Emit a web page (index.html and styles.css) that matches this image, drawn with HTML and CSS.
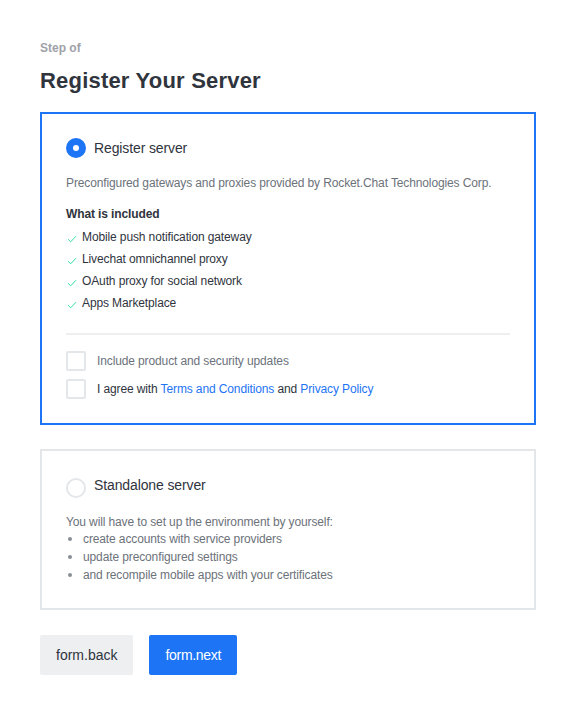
FILE: index.html
```html
<!DOCTYPE html>
<html>
<head>
<meta charset="utf-8">
<link rel="stylesheet" href="styles.css">
</head>
<body>
<main class="page">
  <div class="step">Step of</div>
  <h1 class="title">Register Your Server</h1>

  <section class="card card-selected">
    <label class="option">
      <span class="radio radio-on"></span>
      <span class="option-label">Register server</span>
    </label>
    <p class="desc">Preconfigured gateways and proxies provided by Rocket.Chat Technologies Corp.</p>
    <div class="included-title">What is included</div>
    <ul class="checks">
      <li><svg class="check" viewBox="0 0 10 8" width="10" height="8"><path d="M1 4.2 L3.7 6.8 L9 1.2" fill="none" stroke="#2de0a5" stroke-width="1"/></svg>Mobile push notification gateway</li>
      <li><svg class="check" viewBox="0 0 10 8" width="10" height="8"><path d="M1 4.2 L3.7 6.8 L9 1.2" fill="none" stroke="#2de0a5" stroke-width="1"/></svg>Livechat omnichannel proxy</li>
      <li><svg class="check" viewBox="0 0 10 8" width="10" height="8"><path d="M1 4.2 L3.7 6.8 L9 1.2" fill="none" stroke="#2de0a5" stroke-width="1"/></svg>OAuth proxy for social network</li>
      <li><svg class="check" viewBox="0 0 10 8" width="10" height="8"><path d="M1 4.2 L3.7 6.8 L9 1.2" fill="none" stroke="#2de0a5" stroke-width="1"/></svg>Apps Marketplace</li>
    </ul>
    <hr class="divider">
    <div class="checklist">
      <label class="checkrow">
        <span class="checkbox"></span>
        <span class="check-text muted">Include product and security updates</span>
      </label>
      <label class="checkrow">
        <span class="checkbox"></span>
        <span class="check-text">I agree with <a class="link">Terms and Conditions</a> and <a class="link">Privacy Policy</a></span>
      </label>
    </div>
  </section>

  <section class="card card-standalone">
    <label class="option option-top">
      <span class="radio"></span>
      <span class="option-label">Standalone server</span>
    </label>
    <p class="desc desc-tight">You will have to set up the environment by yourself:</p>
    <ul class="bullets">
      <li>create accounts with service providers</li>
      <li>update preconfigured settings</li>
      <li>and recompile mobile apps with your certificates</li>
    </ul>
  </section>

  <div class="actions">
    <button class="btn btn-secondary">form.back</button>
    <button class="btn btn-primary">form.next</button>
  </div>
</main>
</body>
</html>
```

FILE: styles.css
```css
* { box-sizing: border-box; }
html, body { margin: 0; padding: 0; background: #fff; }
body {
  font-family: "Liberation Sans", Arial, sans-serif;
  color: #2f343d;
}
.page {
  padding: 40px 40px 0 40px;
  width: 576px;
}
.step {
  font-size: 12px;
  font-weight: bold;
  color: #9ea2a8;
  line-height: 16px;
}
.title {
  margin: 9px 0 0 0;
  font-size: 22px;
  line-height: 32px;
  font-weight: bold;
  letter-spacing: 0.2px;
  color: #2f343d;
}
.card {
  border: 2px solid #e4e7ea;
  padding: 24px;
  margin-top: 24px;
  letter-spacing: -0.12px;
}
.card-selected {
  border-color: #1d74f5;
  margin-top: 15px;
}
.card-standalone {
  padding-top: 27px;
}
.option {
  display: flex;
  align-items: center;
  height: 20px;
}
.option-top {
  align-items: flex-start;
}
.option-top .option-label {
  line-height: 14px;
}
.radio {
  width: 20px;
  height: 20px;
  border-radius: 50%;
  border: 2px solid #e4e7ea;
  flex: none;
}
.radio-on {
  border: 7px solid #1d74f5;
  background: #fff;
}
.option-label {
  margin-left: 8px;
  font-size: 14px;
  color: #2f343d;
}
.desc {
  margin: 17px 0 0 0;
  font-size: 12px;
  line-height: 16px;
  color: #6c727a;
}
.included-title {
  margin-top: 15px;
  font-size: 12px;
  line-height: 16px;
  font-weight: bold;
  color: #2f343d;
}
.checks {
  list-style: none;
  margin: 4px 0 0 0;
  padding: 0;
}
.checks li {
  display: flex;
  align-items: center;
  font-size: 12px;
  line-height: 16px;
  height: 22px;
  color: #2f343d;
}
.check {
  margin-left: 1px;
  margin-right: 5px;
  margin-top: 3px;
}
.divider {
  border: 0;
  border-top: 2px solid #eeeff1;
  margin: 19px 0 16px 0;
}
.checklist {
  display: flex;
  flex-direction: column;
  gap: 8px;
}
.checkrow {
  display: flex;
  align-items: center;
  height: 20px;
}
.checkbox {
  width: 20px;
  height: 20px;
  border: 2px solid #e4e7ea;
  border-radius: 2px;
  flex: none;
}
.check-text {
  margin-left: 11px;
  font-size: 12px;
  color: #2f343d;
}
.check-text.muted { color: #6c727a; }
.link { color: #1d74f5; text-decoration: none; }
.desc-tight { margin-top: 16px; }
.bullets {
  list-style: none;
  margin: 0;
  padding: 0;
  font-size: 12px;
  line-height: 18px;
  color: #6c727a;
}
.bullets li {
  display: flex;
  align-items: center;
}
.bullets li::before {
  content: "";
  width: 4px;
  height: 4px;
  border-radius: 50%;
  background: #8a8f96;
  margin-left: 2px;
  margin-right: 11px;
  flex: none;
}
.actions {
  display: flex;
  gap: 16px;
  margin-top: 25px;
}
.btn {
  font-family: "Liberation Sans", Arial, sans-serif;
  font-size: 14px;
  height: 40px;
  padding: 0 16px;
  border: 0;
  border-radius: 2px;
}
.btn-secondary { background: #eeeff1; color: #2f343d; }
.btn-primary { background: #1d74f5; color: #fff; letter-spacing: -0.3px; }
```
